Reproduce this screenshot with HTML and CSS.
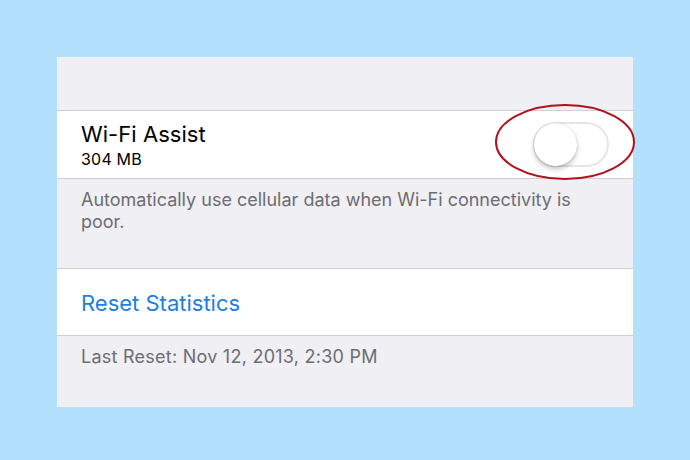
FILE: index.html
```html
<!DOCTYPE html>
<html>
<head>
<meta charset="utf-8">
<link rel="stylesheet" href="styles.css">
</head>
<body>
<div class="panel">
  <div class="spacer-top"></div>
  <div class="cell cell-wifi">
    <div class="cell-text">
      <div class="title">Wi-Fi Assist</div>
      <div class="subtitle">304 MB</div>
    </div>
    <div class="toggle"><div class="knob"></div></div>
  </div>
  <div class="footer footer-wifi">Automatically use cellular data when Wi-Fi connectivity is poor.</div>
  <div class="cell cell-reset">
    <div class="link">Reset Statistics</div>
  </div>
  <div class="footer footer-reset">Last Reset: Nov 12, 2013, 2:30 PM</div>
  <svg class="circle-mark" width="144" height="80" viewBox="0 0 144 80">
    <ellipse cx="72" cy="40" rx="69" ry="37" fill="none" stroke="#b3111c" stroke-width="2"/>
  </svg>
</div>
</body>
</html>
```
FILE: styles.css
```css
html, body {
  margin: 0;
  padding: 0;
}
body {
  background: #b3e1fd;
  width: 690px;
  height: 460px;
  padding-top: 57px;
  box-sizing: border-box;
  font-family: "Inter", "Liberation Sans", sans-serif;
}
.panel {
  position: relative;
  margin-left: 57px;
  width: 576px;
  height: 350px;
  background: #efeff4;
  display: flex;
  flex-direction: column;
}
.spacer-top {
  height: 53px;
  border-bottom: 1px solid #cfcfd3;
}
.cell {
  background: #fff;
  display: flex;
  align-items: center;
  padding-left: 24px;
  box-sizing: border-box;
}
.cell-wifi {
  height: 68px;
  border-bottom: 1px solid #cfcfd3;
  justify-content: space-between;
  padding-right: 24px;
}
.title {
  font-size: 22px;
  color: #000;
  line-height: 26px;
  letter-spacing: 0.05px;
}
.subtitle {
  font-size: 16px;
  color: #000;
  line-height: 18px;
  margin-top: 3px;
  letter-spacing: 0.2px;
}
.toggle {
  width: 76px;
  height: 45px;
  border-radius: 23px;
  border: 2px solid #e6e6e6;
  box-sizing: border-box;
  background: #fff;
  position: relative;
}
.knob {
  position: absolute;
  left: -1px;
  top: -1px;
  width: 43px;
  height: 43px;
  border-radius: 50%;
  background: #fff;
  box-shadow: 0 3px 5px rgba(0,0,0,0.25), 0 0 1px rgba(0,0,0,0.2);
}
.footer {
  color: #6d6d72;
  font-size: 18px;
  line-height: 22px;
  padding: 0 40px 0 24px;
}
.footer-wifi {
  height: 90px;
  padding-top: 10px;
  box-sizing: border-box;
  border-bottom: 1px solid #cfcfd3;
}
.cell-reset {
  height: 67px;
  border-bottom: 1px solid #cfcfd3;
}
.link {
  font-size: 22px;
  color: #1c7fdc;
  margin-top: 2px;
}
.footer-reset {
  padding-top: 10px;
  letter-spacing: 0.25px;
}
.circle-mark {
  position: absolute;
  left: 436px;
  top: 45px;
}
```
